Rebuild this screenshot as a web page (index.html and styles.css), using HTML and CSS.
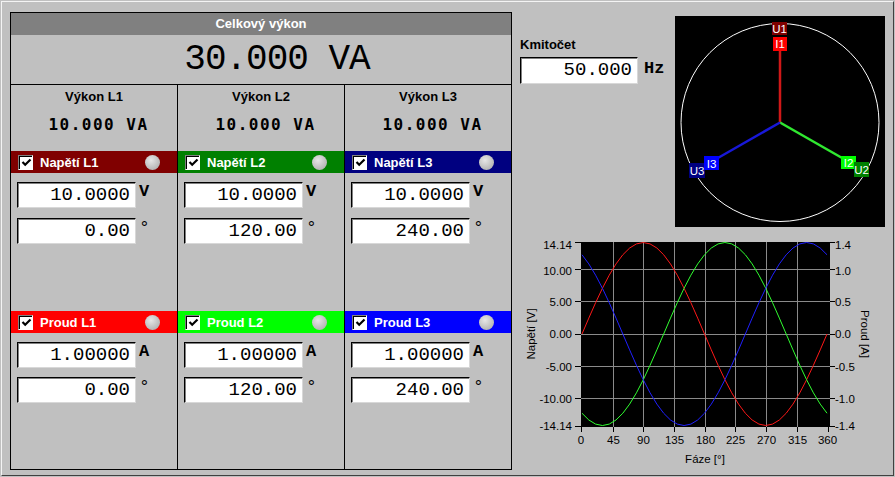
FILE: index.html
```html
<!DOCTYPE html>
<html lang="cs">
<head>
<meta charset="utf-8">
<title>Výkon</title>
<link rel="stylesheet" href="styles.css">
</head>
<body>
<div class="window">
  <div class="panel">
    <div class="panel-head">Celkový výkon</div>
    <div class="total">30.000 VA</div>
    <div class="cols">
      <div class="col">
        <div class="col-title">Výkon L1</div>
        <div class="col-power">10.000 VA</div>
        <div class="bar bar-u1"><span class="chk"><svg width="11" height="11" viewBox="0 0 11 11"><path d="M1.5 5 L4.2 7.8 L9.5 2.5" fill="none" stroke="#000" stroke-width="2.2"/></svg></span><span class="bar-label">Napětí L1</span><span class="led"></span></div>
        <div class="row"><div class="field">10.0000</div><span class="unit">V</span></div>
        <div class="row row-gap"><div class="field">0.00</div><span class="deg">°</span></div>
        <div class="bar bar-current bar-i1"><span class="chk"><svg width="11" height="11" viewBox="0 0 11 11"><path d="M1.5 5 L4.2 7.8 L9.5 2.5" fill="none" stroke="#000" stroke-width="2.2"/></svg></span><span class="bar-label">Proud L1</span><span class="led"></span></div>
        <div class="row"><div class="field">1.00000</div><span class="unit">A</span></div>
        <div class="row"><div class="field">0.00</div><span class="deg">°</span></div>
      </div>
      <div class="col">
        <div class="col-title">Výkon L2</div>
        <div class="col-power">10.000 VA</div>
        <div class="bar bar-u2"><span class="chk"><svg width="11" height="11" viewBox="0 0 11 11"><path d="M1.5 5 L4.2 7.8 L9.5 2.5" fill="none" stroke="#000" stroke-width="2.2"/></svg></span><span class="bar-label">Napětí L2</span><span class="led"></span></div>
        <div class="row"><div class="field">10.0000</div><span class="unit">V</span></div>
        <div class="row row-gap"><div class="field">120.00</div><span class="deg">°</span></div>
        <div class="bar bar-current bar-i2"><span class="chk"><svg width="11" height="11" viewBox="0 0 11 11"><path d="M1.5 5 L4.2 7.8 L9.5 2.5" fill="none" stroke="#000" stroke-width="2.2"/></svg></span><span class="bar-label">Proud L2</span><span class="led"></span></div>
        <div class="row"><div class="field">1.00000</div><span class="unit">A</span></div>
        <div class="row"><div class="field">120.00</div><span class="deg">°</span></div>
      </div>
      <div class="col">
        <div class="col-title">Výkon L3</div>
        <div class="col-power">10.000 VA</div>
        <div class="bar bar-u3"><span class="chk"><svg width="11" height="11" viewBox="0 0 11 11"><path d="M1.5 5 L4.2 7.8 L9.5 2.5" fill="none" stroke="#000" stroke-width="2.2"/></svg></span><span class="bar-label">Napětí L3</span><span class="led"></span></div>
        <div class="row"><div class="field">10.0000</div><span class="unit">V</span></div>
        <div class="row row-gap"><div class="field">240.00</div><span class="deg">°</span></div>
        <div class="bar bar-current bar-i3"><span class="chk"><svg width="11" height="11" viewBox="0 0 11 11"><path d="M1.5 5 L4.2 7.8 L9.5 2.5" fill="none" stroke="#000" stroke-width="2.2"/></svg></span><span class="bar-label">Proud L3</span><span class="led"></span></div>
        <div class="row"><div class="field">1.00000</div><span class="unit">A</span></div>
        <div class="row"><div class="field">240.00</div><span class="deg">°</span></div>
      </div>
    </div>
  </div>

  <div class="side">
    <div class="top-row">
      <div class="freq">
        <div class="freq-label">Kmitočet</div>
        <div class="freq-row"><div class="field freq-field">50.000</div><span class="unit hz">Hz</span></div>
      </div>
      <svg class="phasor" width="210" height="211" viewBox="0 0 210 211">
        <rect width="210" height="211" fill="#000"/>
        <circle cx="105" cy="106.5" r="99" fill="none" stroke="#fff" stroke-width="1"/>
        <line x1="105" y1="106.5" x2="105" y2="35" stroke="#d01818" stroke-width="2.5"/>
        <line x1="105" y1="106.5" x2="168" y2="142.5" stroke="#30e830" stroke-width="2.5"/>
        <line x1="105" y1="106.5" x2="42" y2="142.5" stroke="#1818d8" stroke-width="2.5"/>
        <rect x="97" y="6" width="15" height="13" fill="#800000"/>
        <text class="ph-text" x="104.5" y="17">U1</text>
        <rect x="98" y="21" width="14" height="14" fill="#ff0000"/>
        <text class="ph-text" x="105" y="32">I1</text>
        <rect x="166" y="140" width="15" height="13" fill="#00ff00"/>
        <text class="ph-text" x="173.5" y="151">I2</text>
        <rect x="179" y="146" width="15" height="15" fill="#008000"/>
        <text class="ph-text" x="186.5" y="158">U2</text>
        <rect x="14" y="147" width="16" height="15" fill="#000080"/>
        <text class="ph-text" x="22" y="159">U3</text>
        <rect x="29" y="140" width="15" height="14" fill="#0000ff"/>
        <text class="ph-text" x="36.5" y="151.5">I3</text>
      </svg>
    </div>
    <svg class="chart" width="381" height="240" viewBox="0 0 381 240">
      <rect x="69" y="10" width="249" height="185" fill="#000"/>
      <g stroke="#8a8a8a" stroke-width="1">
        <line x1="101.5" y1="10" x2="101.5" y2="195"/>
        <line x1="131.5" y1="10" x2="131.5" y2="195"/>
        <line x1="162.5" y1="10" x2="162.5" y2="195"/>
        <line x1="193.5" y1="10" x2="193.5" y2="195"/>
        <line x1="223.5" y1="10" x2="223.5" y2="195"/>
        <line x1="254.5" y1="10" x2="254.5" y2="195"/>
        <line x1="285.5" y1="10" x2="285.5" y2="195"/>
        <line x1="69" y1="37.5" x2="318" y2="37.5"/>
        <line x1="69" y1="69.5" x2="318" y2="69.5"/>
        <line x1="69" y1="102.5" x2="318" y2="102.5"/>
        <line x1="69" y1="134.5" x2="318" y2="134.5"/>
        <line x1="69" y1="166.5" x2="318" y2="166.5"/>
      </g>
      <g stroke="#000" stroke-width="1">
        <line x1="63" y1="10.5" x2="69" y2="10.5"/>
        <line x1="63" y1="37.5" x2="69" y2="37.5"/>
        <line x1="63" y1="69.5" x2="69" y2="69.5"/>
        <line x1="63" y1="102.5" x2="69" y2="102.5"/>
        <line x1="63" y1="134.5" x2="69" y2="134.5"/>
        <line x1="63" y1="166.5" x2="69" y2="166.5"/>
        <line x1="63" y1="194.5" x2="69" y2="194.5"/>
        <line x1="318" y1="10.5" x2="323" y2="10.5"/>
        <line x1="318" y1="37.5" x2="323" y2="37.5"/>
        <line x1="318" y1="69.5" x2="323" y2="69.5"/>
        <line x1="318" y1="102.5" x2="323" y2="102.5"/>
        <line x1="318" y1="134.5" x2="323" y2="134.5"/>
        <line x1="318" y1="166.5" x2="323" y2="166.5"/>
        <line x1="318" y1="194.5" x2="323" y2="194.5"/>
        <line x1="69.5" y1="195" x2="69.5" y2="200"/>
        <line x1="101.5" y1="195" x2="101.5" y2="200"/>
        <line x1="131.5" y1="195" x2="131.5" y2="200"/>
        <line x1="162.5" y1="195" x2="162.5" y2="200"/>
        <line x1="193.5" y1="195" x2="193.5" y2="200"/>
        <line x1="223.5" y1="195" x2="223.5" y2="200"/>
        <line x1="254.5" y1="195" x2="254.5" y2="200"/>
        <line x1="285.5" y1="195" x2="285.5" y2="200"/>
        <line x1="316.5" y1="195" x2="316.5" y2="200"/>
      </g>
      <g transform="translate(70,102) scale(0.6806,-9.15)" fill="none" stroke-width="1">
        <polyline vector-effect="non-scaling-stroke" stroke="#ff1818" points="0,0 10,1.736 20,3.42 30,5 40,6.428 50,7.66 60,8.66 70,9.397 80,9.848 90,10 100,9.848 110,9.397 120,8.66 130,7.66 140,6.428 150,5 160,3.42 170,1.736 180,0 190,-1.736 200,-3.42 210,-5 220,-6.428 230,-7.66 240,-8.66 250,-9.397 260,-9.848 270,-10 280,-9.848 290,-9.397 300,-8.66 310,-7.66 320,-6.428 330,-5 340,-3.42 350,-1.736 360,0"/>
        <polyline vector-effect="non-scaling-stroke" stroke="#30ff30" points="0,-8.66 10,-9.397 20,-9.848 30,-10 40,-9.848 50,-9.397 60,-8.66 70,-7.66 80,-6.428 90,-5 100,-3.42 110,-1.736 120,0 130,1.736 140,3.42 150,5 160,6.428 170,7.66 180,8.66 190,9.397 200,9.848 210,10 220,9.848 230,9.397 240,8.66 250,7.66 260,6.428 270,5 280,3.42 290,1.736 300,0 310,-1.736 320,-3.42 330,-5 340,-6.428 350,-7.66 360,-8.66"/>
        <polyline vector-effect="non-scaling-stroke" stroke="#2020ff" points="0,8.66 10,7.66 20,6.428 30,5 40,3.42 50,1.736 60,0 70,-1.736 80,-3.42 90,-5 100,-6.428 110,-7.66 120,-8.66 130,-9.397 140,-9.848 150,-10 160,-9.848 170,-9.397 180,-8.66 190,-7.66 200,-6.428 210,-5 220,-3.42 230,-1.736 240,0 250,1.736 260,3.42 270,5 280,6.428 290,7.66 300,8.66 310,9.397 320,9.848 330,10 340,9.848 350,9.397 360,8.66"/>
      </g>
      <g class="ax-left">
        <text x="60" y="16.5">14.14</text>
        <text x="60" y="42.5">10.00</text>
        <text x="60" y="74">5.00</text>
        <text x="60" y="106">0.00</text>
        <text x="60" y="138.5">-5.00</text>
        <text x="60" y="170.5">-10.00</text>
        <text x="60" y="197.5">-14.14</text>
      </g>
      <g class="ax-right">
        <text x="323" y="16.5">1.4</text>
        <text x="323" y="42.5">1.0</text>
        <text x="323" y="74">0.5</text>
        <text x="323" y="106">0.0</text>
        <text x="323" y="138.5">-0.5</text>
        <text x="323" y="170.5">-1.0</text>
        <text x="323" y="197.5">-1.4</text>
      </g>
      <g class="ax-bottom">
        <text x="69" y="212">0</text>
        <text x="101.5" y="212">45</text>
        <text x="131.5" y="212">90</text>
        <text x="162.5" y="212">135</text>
        <text x="193.5" y="212">180</text>
        <text x="223.5" y="212">225</text>
        <text x="254.5" y="212">270</text>
        <text x="285.5" y="212">315</text>
        <text x="315.5" y="212">360</text>
      </g>
      <text class="ax-title" x="193" y="231">Fáze [°]</text>
      <text class="ax-title" transform="translate(19,102) rotate(-90)">Napětí [V]</text>
      <text class="ax-title" transform="translate(353,102) rotate(90)">Proud [A]</text>
    </svg>
  </div>
</div>
</body>
</html>
```

FILE: styles.css
```css
* {
  box-sizing: border-box;
}

html,
body {
  margin: 0;
  padding: 0;
}

body {
  width: 895px;
  height: 477px;
  overflow: hidden;
  background: #c0c0c0;
  color: #000;
  font-family: "Liberation Sans", Arial, sans-serif;
}

.window {
  margin: 1px;
  width: 893px;
  height: 475px;
  border-style: solid;
  border-width: 1px;
  border-color: #f4f4f4 #404040 #404040 #f4f4f4;
  padding: 10px 0 0 8px;
  display: flex;
}

/* ---------- main power panel ---------- */
.panel {
  flex: none;
  width: 502px;
  height: 458px;
  border: 1px solid #000;
  display: flex;
  flex-direction: column;
}

.panel-head {
  height: 22px;
  background: #808080;
  color: #fff;
  font-weight: bold;
  font-size: 13px;
  line-height: 22px;
  text-align: center;
}

.total {
  height: 50px;
  border-bottom: 1px solid #000;
  font-family: "Liberation Mono", "Courier New", monospace;
  font-size: 36px;
  line-height: 49px;
  letter-spacing: -1px;
  text-align: center;
  padding-left: 32px;
}

.cols {
  flex: 1;
  display: flex;
}

.col {
  flex: none;
  width: 167px;
  border-right: 1px solid #000;
  display: flex;
  flex-direction: column;
}

.col:last-child {
  width: 166px;
  border-right: 0;
}

.col-title {
  height: 20px;
  padding-top: 4px;
  font-size: 13px;
  font-weight: bold;
  line-height: 16px;
  text-align: center;
}

.col-power {
  margin-top: 10px;
  height: 20px;
  padding-left: 9px;
  font-family: "DejaVu Sans Mono", monospace;
  font-weight: bold;
  font-size: 16px;
  letter-spacing: 1.5px;
  line-height: 20px;
  text-align: center;
}

.bar {
  margin-top: 16px;
  height: 22px;
  padding-left: 7px;
  display: flex;
  align-items: center;
  color: #fff;
  font-size: 13px;
  font-weight: bold;
}

.bar-current {
  margin-top: 67px;
}

.bar-u1 { background: #800000; }
.bar-u2 { background: #008000; }
.bar-u3 { background: #000080; }
.bar-i1 { background: #ff0000; }
.bar-i2 { background: #00ff00; }
.bar-i3 { background: #0000ff; }

.chk {
  flex: none;
  width: 15px;
  height: 15px;
  background: #fff;
  border: 1px solid;
  border-color: #808080 #ffffff #ffffff #808080;
  box-shadow: inset 1px 1px 0 #000;
  display: flex;
  align-items: center;
  justify-content: center;
  padding: 1px 0 0 1px;
}

.chk svg {
  display: block;
}

.bar-label {
  margin-left: 7px;
  white-space: nowrap;
}

.led {
  flex: none;
  margin-left: auto;
  margin-right: 17px;
  width: 15px;
  height: 15px;
  border-radius: 50%;
  background: radial-gradient(circle at 40% 35%, #e6e6e6 0%, #c8c8c8 45%, #a4a4a4 100%);
}

.row {
  margin-top: 9px;
  padding-left: 6px;
  display: flex;
  align-items: flex-start;
}

.row-gap {
  margin-top: 10px;
}

.field {
  flex: none;
  width: 119px;
  height: 26px;
  background: #fff;
  border: 1px solid;
  border-color: #000 #d8d8d8 #d8d8d8 #000;
  box-shadow: inset 1px 1px 0 #808080;
  padding-right: 5px;
  font-family: "Liberation Mono", "Courier New", monospace;
  font-size: 19px;
  line-height: 24px;
  text-align: right;
}

.unit {
  margin-left: 3px;
  font-family: "Liberation Mono", "Courier New", monospace;
  font-weight: bold;
  font-size: 17px;
  line-height: 20px;
}

.deg {
  margin-left: 3px;
  font-family: "Liberation Mono", "Courier New", monospace;
  font-size: 18px;
  line-height: 20px;
}

/* ---------- right side ---------- */
.side {
  flex: none;
  width: 381px;
  display: flex;
  flex-direction: column;
}

.top-row {
  display: flex;
}

.freq {
  flex: none;
  width: 163px;
  padding: 25px 0 0 8px;
}

.freq-label {
  font-size: 13px;
  font-weight: bold;
  line-height: 15px;
}

.freq-row {
  margin-top: 5px;
  display: flex;
  align-items: flex-start;
}

.freq-field {
  width: 118px;
  height: 27px;
  line-height: 25px;
}

.hz {
  margin-left: 6px;
  padding-top: 2px;
}

.phasor {
  display: block;
  margin-top: 4px;
}

.ph-text {
  fill: #fff;
  font-family: "Liberation Sans", Arial, sans-serif;
  font-size: 11.5px;
  text-anchor: middle;
}

.chart {
  display: block;
  margin-top: 5px;
}

.chart text {
  font-family: "Liberation Sans", Arial, sans-serif;
  font-size: 11.5px;
  fill: #000;
}

.ax-left text {
  text-anchor: end;
}

.ax-right text {
  text-anchor: start;
}

.ax-bottom text {
  text-anchor: middle;
}

.chart .ax-title {
  text-anchor: middle;
  dominant-baseline: central;
}

.chart text.ax-title[x] {
  dominant-baseline: auto;
}
```
